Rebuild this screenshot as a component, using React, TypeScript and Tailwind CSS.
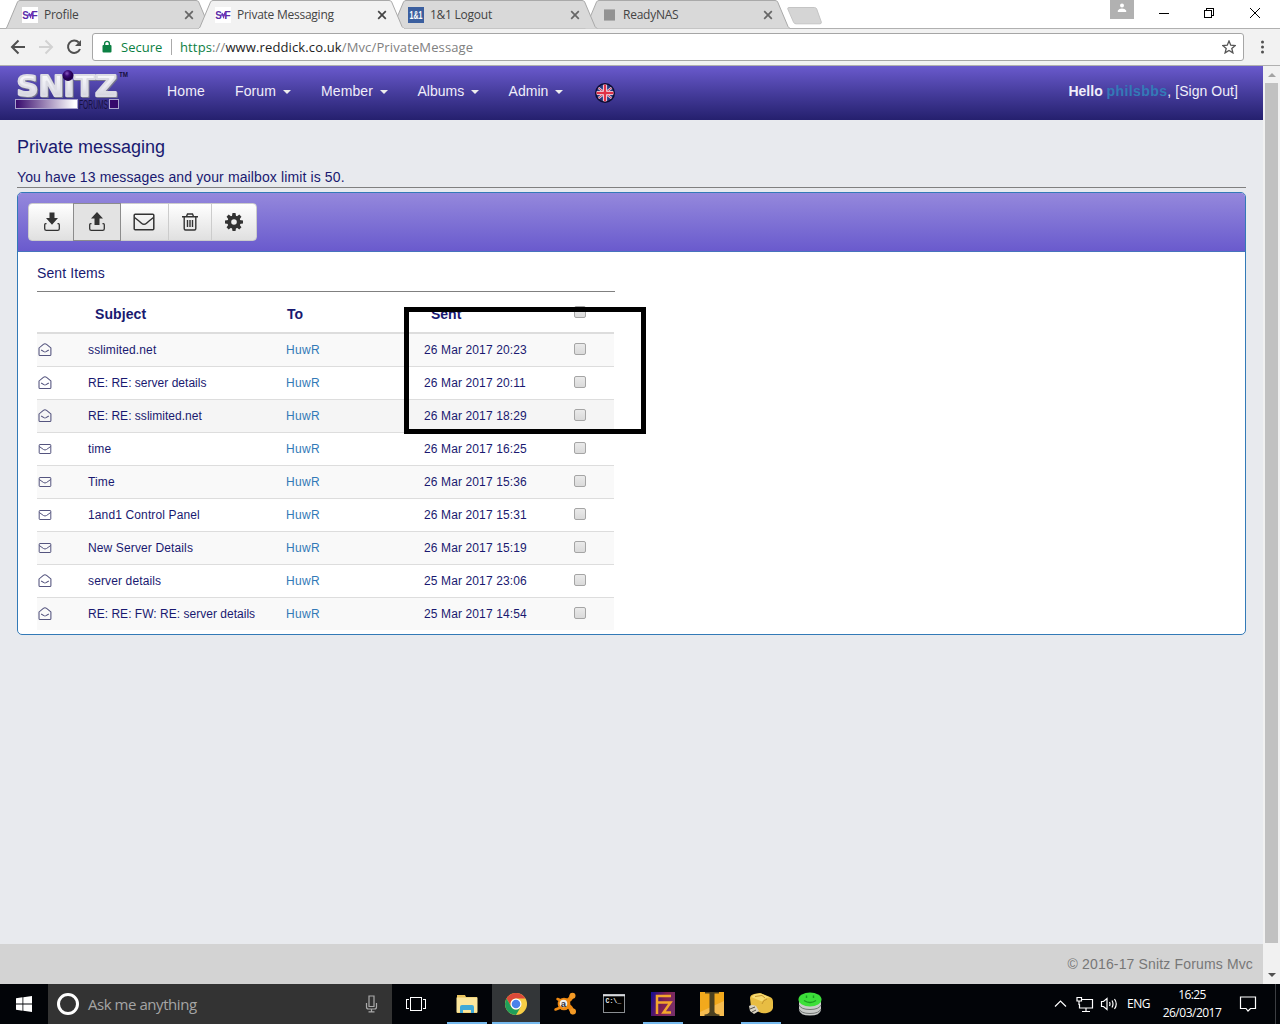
import React from 'react';

const arial = "font-['Liberation_Sans',Arial,sans-serif]";
const segoe = "font-['Open_Sans','Noto_Sans',sans-serif]";

function SnitzFavicon() {
  return (
    <svg width="16" height="16" viewBox="0 0 16 16">
      <rect width="16" height="16" fill="#fff" />
      <text x="0.3" y="12" fontFamily="Liberation Sans" fontWeight="bold" fontSize="11" fill="#5b2ca8" textLength="6.5" lengthAdjust="spacingAndGlyphs">S</text>
      <text x="9.3" y="12" fontFamily="Liberation Sans" fontWeight="bold" fontSize="11" fill="#5b2ca8" textLength="6.5" lengthAdjust="spacingAndGlyphs">F</text>
      <path d="M5.5 8h5M7 6l1.5 4L10 5.5" stroke="#6a35b8" strokeWidth="1.4" fill="none" />
    </svg>
  );
}

function OneFavicon() {
  return (
    <svg width="16" height="16" viewBox="0 0 16 16" className="overflow-visible">
      <rect width="16" height="16" fill="#3b5f9f" />
      <text x="1.5" y="11.8" fontFamily="Liberation Sans" fontWeight="bold" fontSize="10" fill="#fff" textLength="13" lengthAdjust="spacingAndGlyphs">1&amp;1</text>
    </svg>
  );
}

function NasFavicon() {
  return (
    <svg width="16" height="16" viewBox="0 0 16 16">
      <rect x="3" y="2" width="11" height="12" rx="1" fill="#929292" />
      <path d="M3 2.5h11M3 13.5h11" stroke="#b0b0b0" />
    </svg>
  );
}

function Tab({ title, icon, active, last }: { title: string; icon: React.ReactNode; active?: boolean; last?: boolean }) {
  return (
    <div className={active ? 'relative z-20 h-[29px] w-[193px]' : last ? 'relative h-[28px] w-[193px]' : 'relative z-10 h-[28px] w-[193px]'}>
      <svg className="absolute left-0 top-0 overflow-visible" width="206" height="29" viewBox="0 0 206 29">
        <path
          d="M0 28.5 L1 27 L11.5 2 Q12.3 .5 14 .5 H190 Q192 .5 192.7 2 L203 26.5 L205 28.5"
          fill={active ? '#f2f2f2' : '#d9d9d9'}
          stroke="#a9a9a9"
        />
        {active && <path d="M0 28.6H205" stroke="#f2f2f2" strokeWidth="1.2" />}
      </svg>
      <div className="relative flex h-[28px] items-center pl-[16px] pr-[5px] pt-[2px]">
        <span className="w-[22px]">{icon}</span>
        <span className="flex-1 whitespace-nowrap text-[12px] tracking-[-0.25px] text-[#444]">{title}</span>
        <svg width="10" height="10" viewBox="0 0 10 10">
          <path d="M1.200 1.200l7.600 7.600M8.800 1.200l-7.600 7.600" stroke={active ? '#444' : '#666'} strokeWidth="1.7" />
        </svg>
      </div>
    </div>
  );
}

function BrowserChrome() {
  return (
    <div className={`${segoe}`}>
      <div className="relative flex h-[29px] border-b border-[#b0b0b0] bg-white pl-[6px]">
        <Tab title="Profile" icon={<SnitzFavicon />} />
        <Tab title="Private Messaging" icon={<SnitzFavicon />} active />
        <Tab title="1&1 Logout" icon={<OneFavicon />} />
        <Tab title="ReadyNAS" icon={<NasFavicon />} last />
        <svg className="ml-[9px] mt-[7px]" width="36" height="18" viewBox="0 0 36 18">
          <path d="M2 .5H27.5Q29 .5 29.7 2L34.3 15Q34.6 16.8 33 16.8H9Q7.3 16.8 6.600 15.3L.8 2Q.4.5 2 .5Z" fill="#d5d5d5" stroke="#c4c4c4" />
        </svg>
        <div className="flex-1" />
        <div className="flex h-[19px] w-[24px] items-center justify-center bg-[#b1b1b1]">
          <svg width="10" height="10" viewBox="0 0 10 10" className="-mt-[3px]">
            <circle cx="5" cy="2.5" r="2" fill="#fff" />
            <path d="M.8 9V7.5Q2 5.4 5 5.4T9.2 7.5V9Z" fill="#fff" />
          </svg>
        </div>
        <svg className="ml-[25px] mr-[19px] mt-[7px]" width="102" height="12" viewBox="0 0 102 12" fill="none" stroke="#000" shapeRendering="crispEdges">
          <path d="M0 6.5h10" />
          <path d="M45.500 3.500h7v7h-7zM47.500 3V1.500h7v7H53" />
          <path d="M91 1l10 10M101 1l-10 10" shapeRendering="auto" />
        </svg>
      </div>
      <div className="flex h-[37px] items-center border-b border-[#b0b0b0] bg-[#f2f2f2] pl-[10px]">
        <svg width="76" height="20" viewBox="0 0 76 20" fill="none" strokeWidth="2">
          <path d="M15 10H2.500M8.500 3.500L2 10l6.500 6.500" stroke="#505050" />
          <path d="M29 10h12.500M35.500 3.500L42 10l-6.500 6.500" stroke="#d2d2d2" />
          <path d="M68.800 5.500A6.200 6.200 0 1 0 70 12" stroke="#505050" />
          <path d="M71 3v6h-6z" fill="#505050" />
        </svg>
        <div className="ml-[6px] flex h-[28px] w-[1152px] items-center rounded-[3px] border border-[#a6a6a6] bg-white">
          <svg className="ml-[9px]" width="10" height="14" viewBox="0 0 10 14">
            <rect x="0.500" y="5" width="9" height="7.500" rx="1" fill="#0b8043" />
            <path d="M2.600 5.500V3.800a2.400 2.400 0 0 1 4.800 0V5.500" fill="none" stroke="#0b8043" strokeWidth="1.400" />
          </svg>
          <span className="ml-[9px] w-[42px] whitespace-nowrap pt-px text-[13px] text-[#0b8043]">Secure</span>
          <span className="ml-[8px] h-[16px] w-px bg-[#aaa]" />
          <span className="ml-[8px] whitespace-nowrap pt-px text-[13px] tracking-[0.13px] text-[#808080]">
            <span className="text-[#0b8043]">https</span>://<span className="text-[#222]">www.reddick.co.uk</span>/Mvc/PrivateMessage
          </span>
          <div className="flex-1" />
          <svg className="mr-[7px]" width="14" height="14" viewBox="0 0 14 14">
            <path d="M7 1l1.750 4.200 4.500.35-3.450 2.950 1.100 4.400L7 10.500 3.100 12.900l1.100-4.400L.75 5.550l4.500-.35z" fill="none" stroke="#555" strokeWidth="1.300" />
          </svg>
        </div>
        <svg className="ml-[16px]" width="5" height="14" viewBox="0 0 5 14" fill="#505050">
          <circle cx="2.500" cy="2" r="1.500" /><circle cx="2.500" cy="7" r="1.500" /><circle cx="2.500" cy="12" r="1.500" />
        </svg>
      </div>
    </div>
  );
}

function Logo() {
  return (
    <svg width="116" height="42" viewBox="0 0 116 42">
      <defs>
        <linearGradient id="silver" x1="0" y1="0" x2="0" y2="1">
          <stop offset="0" stopColor="#fff" /><stop offset=".6" stopColor="#e6e6ee" /><stop offset="1" stopColor="#c4c4d0" />
        </linearGradient>
        <linearGradient id="bar"><stop offset="0" stopColor="#36096c" /><stop offset=".95" stopColor="#fff" /></linearGradient>
        <radialGradient id="ball" cx=".4" cy=".3"><stop offset="0" stopColor="#8a5ac0" /><stop offset=".5" stopColor="#3a0a78" /><stop offset="1" stopColor="#22004e" /></radialGradient>
      </defs>
      <text
        x="1.500" y="25.500" textLength="100.500" lengthAdjust="spacingAndGlyphs" fontFamily="DejaVu Sans" fontWeight="bold" fontSize="27.500"
        fill="url(#silver)" stroke="#dcdce4" strokeWidth="2" strokeLinejoin="round" className="drop-shadow-[1px_1px_0_#77778c]"
      >SNıTZ</text>
      <circle cx="53" cy="5.500" r="5.400" fill="url(#ball)" />
      <text x="104" y="7" fontFamily="Liberation Sans" fontSize="6.500" fontWeight="bold" fill="#150f3c" textLength="9" lengthAdjust="spacingAndGlyphs">TM</text>
      <rect x=".5" y="29.500" width="62" height="9" fill="url(#bar)" stroke="#a9a2cc" />
      <text x="64" y="38.500" fontFamily="Liberation Sans" fontSize="12" fill="#171040" textLength="29" lengthAdjust="spacingAndGlyphs">FORUMS</text>
      <rect x="94.500" y="29.500" width="9" height="9" fill="#36096c" stroke="#a9a2cc" />
    </svg>
  );
}

function Caret() {
  return <span className="ml-[7px] mt-[2px] h-0 w-0 border-x-4 border-t-4 border-x-transparent border-t-[#eee]" />;
}

function FlagIcon() {
  return (
    <svg width="22" height="22" viewBox="0 0 22 22">
      <defs><clipPath id="disc"><circle cx="11" cy="11" r="8.500" /></clipPath></defs>
      <circle cx="11" cy="11" r="10" fill="#0d0b30" />
      <g clipPath="url(#disc)">
        <rect width="22" height="22" fill="#24377f" />
        <path d="M2 4l18 14M20 4L2 18" stroke="#cfc8e0" strokeWidth="2.400" />
        <path d="M2 4l18 14M20 4L2 18" stroke="#d73c54" strokeWidth="1" />
        <path d="M11 0v22M0 11h22" stroke="#f0e8f4" strokeWidth="4.200" />
        <path d="M11 0v22M0 11h22" stroke="#e03248" strokeWidth="2.400" />
      </g>
    </svg>
  );
}

function Navbar() {
  return (
    <nav className="flex h-[54px] bg-linear-to-b from-[#6a5acd] to-[#25206e] text-[14px] text-[#f0eefa]">
      <div className="ml-[15px] mt-[4px] w-[152px]"><Logo /></div>
      <div className="flex h-[50px] items-center whitespace-nowrap">
        <span className="w-[68px] tracking-[0.15px]">Home</span>
        <span className="flex w-[86px] items-center tracking-[0.1px]">Forum<Caret /></span>
        <span className="flex w-[96.5px] items-center tracking-[0.1px]">Member<Caret /></span>
        <span className="flex w-[91px] items-center tracking-[0px]">Albums<Caret /></span>
        <span className="flex w-[85.500px] items-center tracking-[0.05px]">Admin<Caret /></span>
        <span className="mt-[3px]"><FlagIcon /></span>
      </div>
      <div className="flex-1" />
      <div className="mr-[25px] flex h-[50px] items-center whitespace-pre">
        <b>Hello </b><b className="tracking-[0.4px] text-[#337ab7]">philsbbs</b><span className="tracking-[0.05px]">, [Sign Out]</span>
      </div>
    </nav>
  );
}

function TrayIcon({ up }: { up?: boolean }) {
  return (
    <svg width="16" height="20" viewBox="0 0 16 20">
      <path d={up ? 'M8 0l6 6.500h-3.500V13h-5V6.500H2z' : 'M5.500 .5h5V6H14L8 12.800 2 6h3.500z'} fill="#333" />
      <path d="M2.500 11.700H1.600q-.9 0-.9 1v4q0 1.700 1.700 1.700h11.200q1.700 0 1.700-1.700v-4q0-1-.9-1H13.500" fill="none" stroke="#333" strokeWidth="1.300" />
    </svg>
  );
}

function EnvelopeIcon() {
  return (
    <svg width="22" height="18" viewBox="0 0 22 18" fill="none" stroke="#333" strokeWidth="1.500">
      <rect x="1.200" y="1.200" width="19.600" height="15.600" rx="1" />
      <path d="M1.500 4.500q4 3 7 5.700 2.500 2.200 5 0 3-2.700 7-5.700" />
    </svg>
  );
}

function TrashIcon() {
  return (
    <svg width="16" height="18" viewBox="0 0 16 18" fill="none" stroke="#333" strokeWidth="1.400">
      <path d="M0 3.700h16M2.200 4v11.500q0 1.500 1.300 1.500h9q1.300 0 1.300-1.500V4M4.500 3.500L5.500 1h5l1 2.500M5.500 7v7M8 7v7M10.500 7v7" />
    </svg>
  );
}

function GearIcon() {
  return (
    <svg width="18" height="18" viewBox="-9 -9 18 18">
      <circle r="4.700" fill="none" stroke="#333" strokeWidth="3.800" />
      {[0, 45, 90, 135, 180, 225, 270, 315].map((a) => (
        <path key={a} d="M-2.100-5.500L-1.500-9h3l.6 3.500z" fill="#333" transform={`rotate(${a})`} />
      ))}
    </svg>
  );
}

function Toolbar() {
  return (
    <div className="flex h-[59px] border-b border-[#4673bd] bg-linear-to-b from-[#9588dc] to-[#6a5acd] pl-[10px] pt-[10px]">
      <div className="flex h-[38px] w-[229px] rounded-[4px] border border-[#ccc] bg-linear-to-b from-white to-[#e0e0e0]">
        <span className="flex w-[44px] items-center justify-center pl-[2px]"><TrayIcon /></span>
        <span className="-my-px flex w-[48px] items-center justify-center border border-[#8c8c8c] bg-[#e3e3e3] pr-px"><TrayIcon up /></span>
        <span className="flex w-[48px] items-center justify-center border-r border-[#ccc] pr-px"><EnvelopeIcon /></span>
        <span className="flex w-[43px] items-center justify-center border-r border-[#ccc] pb-px"><TrashIcon /></span>
        <span className="flex w-[44px] items-center justify-center pb-px"><GearIcon /></span>
      </div>
    </div>
  );
}

function MailIcon({ open }: { open: boolean }) {
  return (
    <svg width="14" height="13" viewBox="0 0 14 13" fill="none" stroke="#55557f" strokeWidth="1">
      {open ? (
        <path d="M1.500 5L5.500 1.300q1.500-1 3 0l4 3.700V11.500q0 1-1 1H2.500q-1 0-1-1zM3.500 7L6 8.600q1 .6 2 0l2.500-1.600" transform="translate(-.6 0) scale(1.080 1)" />
      ) : (
        <path d="M1.800 2.500h10.400q.6 0 .6.600v7.800q0 .6-.6.600H1.800q-.6 0-.6-.6V3.100q0-.6.6-.6zM1.300 4.500L5.500 7.500q1.500 1 3 0l4.200-3" />
      )}
    </svg>
  );
}

function Checkbox() {
  return <span className="block h-[12px] w-[12px] rounded-[2px] border border-[#a5a5a5] bg-linear-to-b from-[#eaeaea] to-[#dadada]" />;
}

const messages = [
  { open: true, subject: 'sslimited.net', sent: '26 Mar 2017 20:23' },
  { open: true, subject: 'RE: RE: server details', sent: '26 Mar 2017 20:11' },
  { open: true, subject: 'RE: RE: sslimited.net', sent: '26 Mar 2017 18:29', hover: true },
  { open: false, subject: 'time', sent: '26 Mar 2017 16:25' },
  { open: false, subject: 'Time', sent: '26 Mar 2017 15:36' },
  { open: false, subject: '1and1 Control Panel', sent: '26 Mar 2017 15:31' },
  { open: false, subject: 'New Server Details', sent: '26 Mar 2017 15:19' },
  { open: true, subject: 'server details', sent: '25 Mar 2017 23:06' },
  { open: true, subject: 'RE: RE: FW: RE: server details', sent: '25 Mar 2017 14:54' },
];

const columns = 'grid grid-cols-[51px_198px_138px_150px_1fr] items-center whitespace-nowrap';

function MessageTable() {
  return (
    <div className="relative w-[577px]">
      <div className={`${columns} h-[42px] border-b-2 border-[#ddd] pt-[4px] text-[14px] font-bold text-[#191970]`}>
        <span />
        <span className="pl-[7px] tracking-[0.1px]">Subject</span>
        <span className="pl-px">To</span>
        <span className="pl-[7px]">Sent</span>
        <span className="-mt-[4px]"><Checkbox /></span>
      </div>
      {messages.map((m, i) => (
        <div
          key={m.sent}
          className={`${columns} text-[12px] text-[#191970] ${i === 0 ? 'h-[32px]' : 'h-[33px] border-t border-[#ddd]'} ${m.hover ? 'bg-[#f5f5f5]' : i % 2 === 0 ? 'bg-[#f9f9f9]' : 'bg-white'}`}
        >
          <span className="-mt-px pl-px"><MailIcon open={m.open} /></span>
          <span className={m.subject.startsWith('RE') ? 'tracking-[0.02px]' : 'tracking-[0.13px]'}>{m.subject}</span>
          <span className="tracking-[0.3px] text-[#337ab7]">HuwR</span>
          <span className="tracking-[0.12px]">{m.sent}</span>
          <span className="-mt-[3px]"><Checkbox /></span>
        </div>
      ))}
      <div className="absolute left-[367px] top-[15px] h-[127px] w-[242px] border-5 border-black" />
    </div>
  );
}

function Page() {
  return (
    <div className={`flex h-[918px] ${arial}`}>
      <div className="flex w-[1263px] flex-col bg-[#e8eaee]">
        <Navbar />
        <main className="flex-1 pl-[17px] pr-[17px] text-[#191970]">
          <h1 className="pt-[15px] text-[18px] leading-[24px]">Private messaging</h1>
          <p className="mt-[8px] h-[21px] border-b border-[#808080] text-[14px] leading-[20px] tracking-[0.12px]">
            You have 13 messages and your mailbox limit is 50.
          </p>
          <section className="mt-[4px] h-[443px] overflow-hidden rounded-[5px] border border-[#337ab7] bg-white">
            <Toolbar />
            <div className="pl-[19px]">
              <h2 className="h-[40px] w-[578px] border-b border-[#808080] pt-[11px] text-[14px] leading-[20px] tracking-[0.1px]">Sent Items</h2>
              <MessageTable />
            </div>
          </section>
        </main>
        <footer className="flex h-[40px] items-center justify-end bg-[#d3d3d3] pr-[10px] text-[14px] tracking-[0.15px] text-[#777]">
          © 2016-17 Snitz Forums Mvc
        </footer>
      </div>
      <div className="flex w-[17px] flex-col items-center bg-[#f1f1f1]">
        <span className="mt-[7px] h-0 w-0 border-x-4 border-b-4 border-x-transparent border-b-[#a3a3a3]" />
        <span className="mt-[6px] h-[860px] w-[13px] bg-[#c1c1c1]" />
        <span className="mt-[30px] h-0 w-0 border-x-4 border-t-4 border-x-transparent border-t-[#505050]" />
      </div>
    </div>
  );
}

function ExplorerIcon() {
  return (
    <svg width="24" height="24" viewBox="0 0 24 24">
      <path d="M2 3h8l1 2h11v16H2z" fill="#e9c35c" />
      <path d="M1.500 5.500h21v15h-21z" fill="#fbe69c" />
      <path d="M5 21v-6q0-2 2-2h10q2 0 2 2v6h-3v-3H8v3z" fill="#3fa9d8" />
    </svg>
  );
}

function ChromeIcon() {
  return (
    <svg width="24" height="24" viewBox="-12 -12 24 24">
      <circle r="11" fill="#f7ce45" />
      <path d="M-9.500-5.500A11 11 0 0 1 9.500-5.500H0A5.500 5.500 0 0 0-4.800 2.700z" fill="#db4a3a" />
      <path d="M-9.500-5.500A11 11 0 0 0 0 11L4.800 2.700A5.500 5.500 0 0 1-4.800 2.700z" fill="#209e5a" />
      <circle r="5.500" fill="#fff" /><circle r="4.300" fill="#4c82ea" />
    </svg>
  );
}

function AvastIcon() {
  return (
    <svg width="24" height="24" viewBox="0 0 24 24">
      <g stroke="#ee8912" strokeLinecap="round" fill="none">
        <path d="M13 9q4 0 6-5.500" strokeWidth="4.500" />
        <path d="M14 13q4 2 5.500 7" strokeWidth="4.500" />
        <path d="M9 9L4.500 7M9 15L2.500 17.500" strokeWidth="2.500" />
      </g>
      <circle cx="19.500" cy="3.800" r="3" fill="#f39a25" /><circle cx="20" cy="19.500" r="3" fill="#f39a25" />
      <circle cx="11" cy="12" r="6.300" fill="#ee8912" />
      <circle cx="10.500" cy="11.500" r="3.800" fill="#eee" />
      <text x="7.800" y="14.500" fontFamily="Liberation Sans" fontWeight="bold" fontSize="9.500" fill="#30303a">a</text>
    </svg>
  );
}

function ConsoleIcon() {
  return (
    <svg width="24" height="24" viewBox="0 0 24 24">
      <rect x="1.500" y="2.500" width="21" height="18" fill="#000" stroke="#8a8e92" />
      <path d="M1 3.300h22" stroke="#d6d9dd" strokeWidth="2" />
      <text x="3.500" y="11" fontFamily="Liberation Mono" fontSize="6.500" fontWeight="bold" fill="#eee">C:\_</text>
    </svg>
  );
}

function FileZillaIcon() {
  return (
    <svg width="24" height="24" viewBox="0 0 24 24">
      <defs><linearGradient id="fz" y2=".3"><stop offset="0" stopColor="#120c96" /><stop offset=".6" stopColor="#81204e" /><stop offset="1" stopColor="#782e68" /></linearGradient></defs>
      <rect width="24" height="24" fill="url(#fz)" />
      <path d="M6 22V4h14M6 10.500h13.500L12.500 20.500H20" fill="none" stroke="#f4a62c" strokeWidth="2.500" />
    </svg>
  );
}

function GoldIcon() {
  return (
    <svg width="24" height="24" viewBox="0 0 24 24">
      <rect width="24" height="24" fill="#f2a91c" /><path d="M0 20L24 9v15H0z" fill="#f6bc50" />
      <path d="M5 0h14v1.500h-4.500V20q1 2 5 2.500V24H4.500v-1.500q4-.5 5-2.500V1.500H5z" fill="#4c4120" />
    </svg>
  );
}

function GadgetIcon() {
  return (
    <svg width="26" height="24" viewBox="0 0 26 24">
      <path d="M2 6q0-3 4-4l6-1 10 4q3 1 3 5v6q-1 4-6 5-4 1-8-1l-8-5z" fill="#e8bd43" />
      <path d="M3 5l4-3 6-.5 9 4q-5 0-8 4z" fill="#f6da70" />
      <path d="M7 4.500l7-1 3 2.500M14 12q1-4 5-5" stroke="#c3942f" fill="none" />
      <path d="M1 14q3-2 7 0l3 5-5 3-4-3z" fill="#d9d3c1" /><path d="M2 17l5-2M4 20l4-2" stroke="#55514a" />
    </svg>
  );
}

function DatabaseIcon() {
  return (
    <svg width="24" height="24" viewBox="0 0 24 24">
      <path d="M1 7v11q1 5.500 11 5.500T23 18V7z" fill="#c9ccca" />
      <path d="M1 13q2 4.500 11 4.500t11-4.500M1 17q2 4.500 11 4.500t11-4.500" stroke="#747876" strokeWidth="1" fill="none" />
      <ellipse cx="12" cy="7.500" rx="11.500" ry="7" fill="#3ddf3a" />
      <path d="M8.500 3.500v2.500M15.500 3.500v2.500M6 8.500q6 4 12 0" stroke="#1c9c22" strokeWidth="1.400" fill="none" />
    </svg>
  );
}

const apps = [
  { icon: <ExplorerIcon />, state: 'open' },
  { icon: <ChromeIcon />, state: 'active' },
  { icon: <AvastIcon />, state: '' },
  { icon: <ConsoleIcon />, state: '' },
  { icon: <FileZillaIcon />, state: 'open' },
  { icon: <GoldIcon />, state: '' },
  { icon: <GadgetIcon />, state: 'open' },
  { icon: <DatabaseIcon />, state: '' },
];

function Taskbar() {
  return (
    <div className={`flex h-[40px] bg-[#020408] ${segoe}`}>
      <div className="flex w-[48px] items-center justify-center">
        <svg width="16" height="16" viewBox="0 0 16 16" fill="#fff">
          <path d="M0 2.200l6.500-.9v6.200H0zM7.300 1.200L16 0v7.500H7.300zM0 8.400h6.500v6.300L0 13.800zM7.300 8.400H16V16l-8.700-1.200z" />
        </svg>
      </div>
      <div className="flex w-[344px] items-center bg-[#333]">
        <span className="ml-[9px] h-[22px] w-[22px] rounded-full border-[3px] border-white" />
        <span className="ml-[9px] flex-1 text-[15px] tracking-[-0.45px] text-[#a5a5a5]">Ask me anything</span>
        <svg className="mr-[14px]" width="13" height="18" viewBox="0 0 13 18" fill="none" stroke="#aaa" strokeWidth="1.200">
          <path d="M4 1h5v10.500H4zM1.500 8v4q0 2 2 2h6q2 0 2-2V8M6.500 14v3M3.500 16.800h6" />
        </svg>
      </div>
      <div className="flex w-[50px] items-center pl-[14px]">
        <svg width="20" height="14" viewBox="0 0 20 14" fill="none" stroke="#fff" shapeRendering="crispEdges">
          <path d="M4.500.5h11v13h-11zM3 2.500H.5v9H3M17 2.500h2.500v9H17" />
        </svg>
      </div>
      {apps.map((a, i) => (
        <div key={i} className="flex w-[49px] flex-col items-center">
          <div className={a.state === 'active' ? 'flex h-[38px] w-[48px] items-center justify-center bg-[#333638]' : 'flex h-[38px] items-center justify-center'}>
            <span className="pt-[2px]">{a.icon}</span>
          </div>
          {a.state && <span className={a.state === 'active' ? 'h-[2px] w-[48px] bg-[#76b9ed]' : 'h-[2px] w-[40px] bg-[#76b9ed]'} />}
        </div>
      ))}
      <div className="flex-1" />
      <div className="flex items-center text-[12px] text-white">
        <svg width="64" height="18" viewBox="0 0 64 18" fill="none" stroke="#fff" strokeWidth="1.200">
          <path d="M2 11.500L7.500 6l5.500 5.500" />
          <path d="M29 4.500h10.500v8.500H26.500V9M33 13v3.500M29 16.500h8M24 2.500h4.500v3.500H24zM26 6v4" />
          <path d="M48.500 6.500h2L54 3.500v11l-3.500-3H48.500zM56.500 7q1 2 0 4M59 5.500q2 3.500 0 7M61.500 4q3.500 5 0 10" />
        </svg>
        <span className="ml-[10px] w-[30px] tracking-[-0.5px]">ENG</span>
        <div className="ml-[2px] flex w-[66px] flex-col items-center whitespace-nowrap text-[12px] leading-[18px]">
          <span className="tracking-[-0.6px]">16:25</span>
          <span className="tracking-[-0.5px]">26/03/2017</span>
        </div>
        <svg className="ml-[14px] mr-[18px]" width="18" height="18" viewBox="0 0 18 18" fill="none" stroke="#fff" strokeWidth="1.200">
          <path d="M1.500 2h15v11.500h-5L9 16l-2-2.500H1.500z" />
        </svg>
        <span className="mr-[4px] h-[40px] w-px bg-[#3c3e42]" />
      </div>
    </div>
  );
}

export default function App() {
  return (
    <div className="h-[1024px] w-[1280px] overflow-hidden">
      <BrowserChrome />
      <Page />
      <Taskbar />
    </div>
  );
}
